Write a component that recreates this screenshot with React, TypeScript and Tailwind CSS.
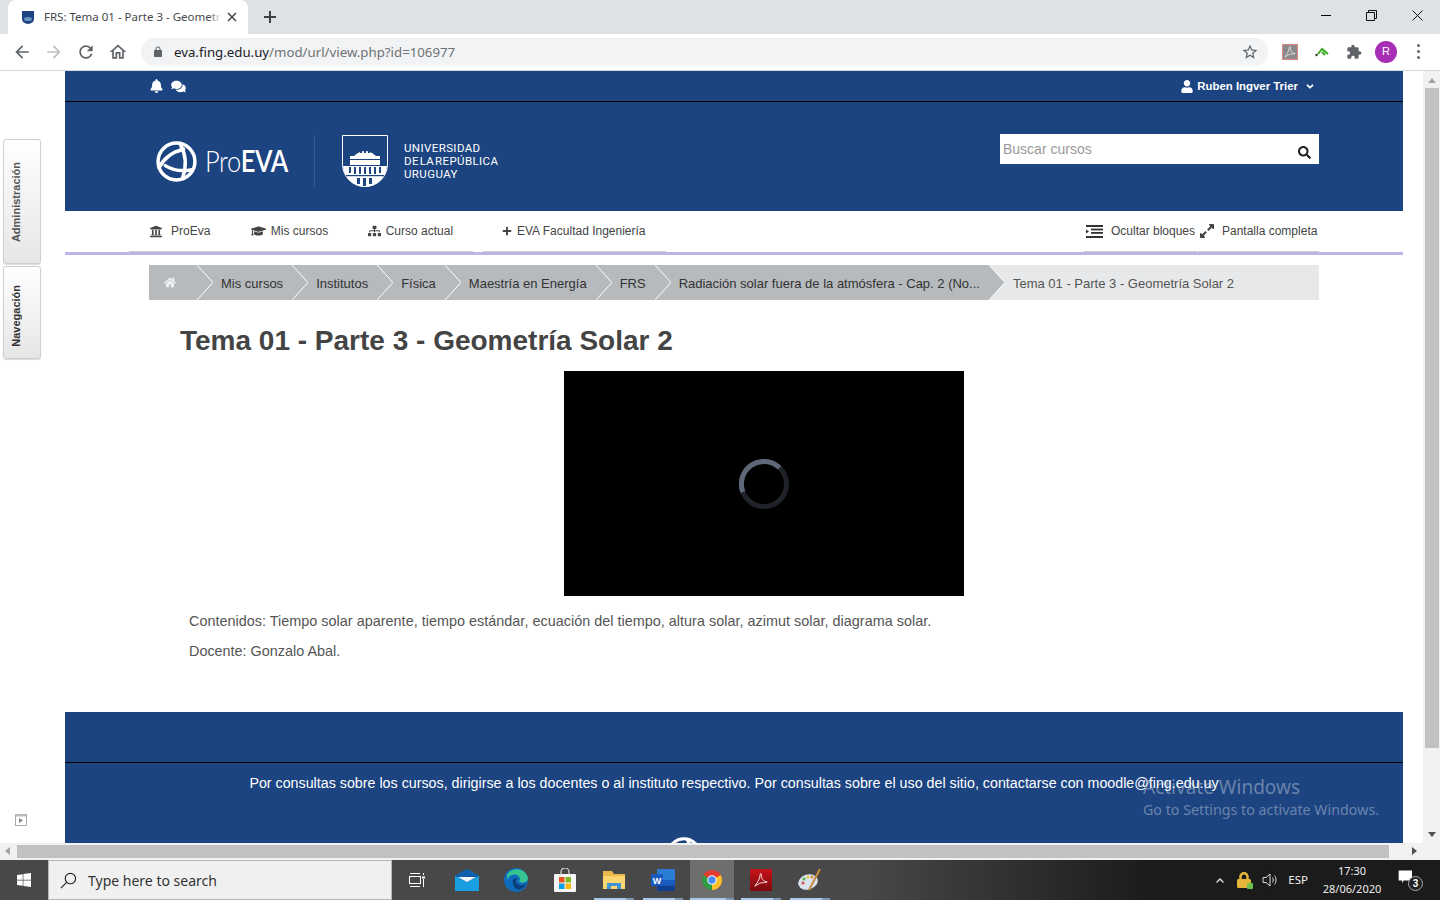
import React from "react";
import { FaBell, FaComments, FaUser, FaUniversity, FaGraduationCap, FaSitemap, FaPlus, FaHome, FaSearch, FaExpandAlt, FaAngleDown, FaChevronUp, FaLock, FaWindows } from "react-icons/fa";

const M = ({ d, className, fill = "currentColor" }: { d: string; className?: string; fill?: string }) => (
  <svg viewBox="0 0 24 24" className={className} fill={fill}><path d={d} /></svg>
);

const ProLogo = ({ className }: { className?: string }) => (
  <svg viewBox="0 0 42 40" className={className} fill="none" stroke="white" strokeWidth="3.4" strokeLinecap="round">
    <circle cx="21" cy="20" r="18" />
    <path d="M4 26 Q 11 12 28 8" />
    <path d="M10 24 Q 21 31 36 28" />
    <path d="M25 4 Q 33 18 27 36" />
  </svg>
);

const Shield = () => (
  <svg viewBox="0 0 46 52" className="h-[52px] w-[46px]">
    <path d="M0.5 0.5 H45.5 V29 A22.5 22.5 0 0 1 0.5 29 Z" fill="none" stroke="white" strokeWidth="1" />
    <path d="M12 21 Q23 11 34 21 Z" fill="white" />
    <path d="M8 21 H38 V30 H8 Z" fill="white" />
    <path d="M1 30 H45 A22 22 0 0 1 1 30 Z" fill="white" />
    <g fill="#1c4481">
      <rect x="18" y="16" width="2" height="2" /><rect x="22" y="16" width="2" height="2" /><rect x="26" y="16" width="2" height="2" />
      <rect x="8" y="24" width="30" height="1" />
      <rect x="1" y="30" width="44" height="1" />
      <rect x="7" y="32" width="2" height="6" /><rect x="12" y="32" width="2" height="7" /><rect x="17" y="32" width="2" height="7" /><rect x="22" y="32" width="2" height="7" /><rect x="27" y="32" width="2" height="7" /><rect x="32" y="32" width="2" height="7" /><rect x="37" y="32" width="2" height="6" />
      <rect x="4" y="40" width="38" height="1.2" />
      <rect x="15" y="43" width="3" height="6" /><rect x="21" y="43" width="3" height="8" /><rect x="27" y="43" width="3" height="6" />
    </g>
  </svg>
);

const crumbs = ["Mis cursos", "Institutos", "Física", "Maestría en Energía", "FRS", "Radiación solar fuera de la atmósfera - Cap. 2 (No..."];

const Chevron = () => (
  <svg viewBox="0 0 16 35" className="absolute left-0 top-0 h-[35px] w-[16px]" fill="none" stroke="#ffffff" strokeWidth="1">
    <polyline points="0,0 16,17.5 0,35" />
  </svg>
);

const TaskBtn = ({ children, active, running }: { children: React.ReactNode; active?: boolean; running?: boolean }) => (
  <div className="relative flex h-10 w-[49px] items-center justify-center">
    {active && <div className="absolute bottom-0 left-[2px] right-[3px] top-0 bg-[#6e6e6e]" />}
    <div className="relative flex items-center justify-center">{children}</div>
    {running && <div className={`absolute bottom-0 flex h-[2px] ${active ? "left-[2px] right-[3px]" : "left-[4px] right-[5px]"}`}><div className="flex-1 bg-[#a8c8ee]" /><div className="w-[8px] bg-[#7d97b5]" /></div>}
  </div>
);

export default function App() {
  return (
    <div className="flex h-[900px] w-[1440px] flex-col overflow-hidden bg-white font-['Liberation_Sans',Arial,sans-serif] text-[#444]">
      {/* Tab strip */}
      <div className="flex h-[34px] shrink-0 items-stretch bg-[#dee1e6] pl-[8px] font-['Noto_Sans',sans-serif]">
        <div className="flex w-[240px] items-center rounded-t-[8px] bg-white pl-[14px] pr-[11px]">
          <svg viewBox="0 0 12 13" className="h-[13px] w-[12px] shrink-0"><path d="M0 0H12V8A6 5 0 0 1 0 8Z" fill="#1c4481" /><ellipse cx="6" cy="8" rx="4" ry="2" fill="#6d93c4" /></svg>
          <div className="relative ml-[10px] whitespace-nowrap text-[11.5px] text-[#45484c]">
            FRS: Tema 01 - Parte 3 - Geometr
            <div className="absolute bottom-0 right-0 top-0 w-[12px] bg-gradient-to-r from-transparent to-white" />
          </div>
          <svg viewBox="0 0 10 10" className="ml-auto h-[10px] w-[10px]" stroke="#45484c" strokeWidth="1.6"><path d="M1 1L9 9M9 1L1 9" /></svg>
        </div>
        <div className="ml-[16px] flex items-center">
          <svg viewBox="0 0 12 12" className="h-[12px] w-[12px]" stroke="#3c4043" strokeWidth="2"><path d="M6 0V12M0 6H12" /></svg>
        </div>
        <div className="ml-auto flex items-center gap-[35px] pb-[4px] pr-[17px]">
          <div className="h-[1px] w-[10px] bg-black" />
          <svg viewBox="0 0 11 11" className="h-[11px] w-[11px]" fill="none" stroke="#111" strokeWidth="1"><path d="M0.5 2.5H8.5V10.5H0.5ZM2.5 2.5V0.5H10.5V8.5H8.5" /></svg>
          <svg viewBox="0 0 11 11" className="h-[11px] w-[11px]" stroke="#111" strokeWidth="1"><path d="M0.5 0.5L10.5 10.5M10.5 0.5L0.5 10.5" /></svg>
        </div>
      </div>
      {/* Toolbar */}
      <div className="flex h-[37px] shrink-0 items-center border-b border-[#d5d7da] bg-white pb-[1px] pl-[12px]">
        <M d="M20 11H7.83l5.59-5.59L12 4l-8 8 8 8 1.41-1.41L7.83 13H20v-2z" className="h-[20px] w-[20px] text-[#5f6368]" />
        <M d="M12 4l-1.41 1.41L16.17 11H4v2h12.17l-5.58 5.59L12 20l8-8z" className="ml-[12px] h-[20px] w-[20px] text-[#bcbfc3]" />
        <M d="M17.65 6.35C16.2 4.9 14.21 4 12 4c-4.42 0-7.99 3.58-7.99 8s3.57 8 7.99 8c3.73 0 6.84-2.55 7.73-6h-2.08c-.82 2.33-3.04 4-5.65 4-3.31 0-6-2.69-6-6s2.69-6 6-6c1.66 0 3.14.69 4.22 1.78L13 11h7V4l-2.35 2.35z" className="ml-[12px] h-[20px] w-[20px] text-[#5f6368]" />
        <M d="M12 5.69l5 4.5V18h-2v-6H9v6H7v-7.81l5-4.5M12 3L2 12h3v8h6v-6h2v6h6v-8h3L12 3z" className="ml-[12px] h-[20px] w-[20px] text-[#5f6368]" />
        <div className="ml-[13px] flex h-[28px] w-[1127px] items-center rounded-full bg-[#f1f3f4] pl-[11px] pr-[9px]">
          <M d="M18 8h-1V6c0-2.76-2.24-5-5-5S7 3.24 7 6v2H6c-1.1 0-2 .9-2 2v10c0 1.1.9 2 2 2h12c1.1 0 2-.9 2-2V10c0-1.1-.9-2-2-2zM9 6c0-1.66 1.34-3 3-3s3 1.34 3 3v2H9V6z" className="h-[12px] w-[12px] text-[#5f6368]" />
          <div className="ml-[10px] pt-[2px] font-['Noto_Sans',sans-serif] text-[13.25px] text-[#6f7276]"><span className="text-[#202124]">eva.fing.edu.uy</span>/mod/url/view.php?id=106977</div>
          <M d="M22 9.24l-7.19-.62L12 2 9.19 8.63 2 9.24l5.46 4.73L5.82 21 12 17.27 18.18 21l-1.63-7.03L22 9.24zM12 15.4l-3.76 2.27 1-4.28-3.32-2.88 4.38-.38L12 6.1l1.71 4.04 4.38.38-3.32 2.88 1 4.28L12 15.4z" className="ml-auto h-[18px] w-[18px] text-[#5f6368]" />
        </div>
        <div className="ml-[14px] flex h-[16px] w-[16px] items-center justify-center border border-[#e08b80] bg-[#8a8a8a]">
          <svg viewBox="0 0 14 14" className="h-[12px] w-[12px]" fill="none" stroke="#dddddd" strokeWidth="1.1"><path d="M1 13C4 9 6 5 6 2C6 0 8 0 7.5 2.5C7 5.5 9.5 8.5 13 8.5C13 10 9 8.5 5 10.5C3 11.5 2 13 1 13Z" /></svg>
        </div>
        <svg viewBox="0 0 14 10" className="ml-[17px] h-[10px] w-[14px]" stroke="#3aa821" strokeWidth="2" fill="none"><path d="M3 7L7 2L13 7M7 5L10 8" /><circle cx="1.5" cy="8" r="1.2" fill="#333" stroke="none" /></svg>
        <M d="M20.5 11H19V7c0-1.1-.9-2-2-2h-4V3.5C13 2.12 11.88 1 10.5 1S8 2.12 8 3.5V5H4c-1.1 0-1.99.9-1.99 2v3.8H3.5c1.49 0 2.7 1.21 2.7 2.7s-1.21 2.7-2.7 2.7H2V20c0 1.1.9 2 2 2h3.8v-1.5c0-1.49 1.21-2.7 2.7-2.7 1.49 0 2.7 1.21 2.7 2.7V22H17c1.1 0 2-.9 2-2v-4h1.5c1.38 0 2.5-1.12 2.5-2.5S21.88 11 20.5 11z" className="ml-[17px] h-[16px] w-[16px] text-[#5f6368]" />
        <div className="ml-[13px] flex h-[22px] w-[22px] items-center justify-center rounded-full bg-[#a62fb5] text-[11px] text-white">R</div>
        <div className="ml-[20px] flex flex-col gap-[3px]">
          <div className="h-[3px] w-[3px] rounded-full bg-[#5f6368]" /><div className="h-[3px] w-[3px] rounded-full bg-[#5f6368]" /><div className="h-[3px] w-[3px] rounded-full bg-[#5f6368]" />
        </div>
      </div>

      {/* Viewport */}
      <div className="relative flex h-[772px] shrink-0 overflow-hidden">
        <div className="flex w-[65px] shrink-0 flex-col pl-[3px] pt-[68px]">
          <div className="flex h-[125px] w-[38px] items-center rounded-[3px] border border-[#cfcfcf] bg-gradient-to-b from-white to-[#e6e6e6] pl-[5px] pt-[2px] shadow-[0_1px_1px_rgba(0,0,0,0.15)]">
            <span className="rotate-180 text-[11px] font-bold leading-[14px] text-[#555] [writing-mode:vertical-rl]">Administración</span>
          </div>
          <div className="mt-[2px] flex h-[93px] w-[38px] items-center rounded-[3px] border border-[#cfcfcf] bg-gradient-to-b from-white to-[#e6e6e6] pl-[5px] pt-[6px] shadow-[0_1px_1px_rgba(0,0,0,0.15)]">
            <span className="rotate-180 text-[11px] font-bold leading-[14px] text-[#333] [writing-mode:vertical-rl]">Navegación</span>
          </div>
          <svg viewBox="0 0 12 12" className="ml-[12px] mt-auto mb-[17px] h-[12px] w-[12px]" fill="none"><rect x="0.5" y="0.5" width="11" height="11" stroke="#aaa" /><rect x="0.5" y="0.5" width="11" height="2" fill="#bbb" /><path d="M4 4L8 6.5L4 9Z" fill="#888" /></svg>
        </div>

        <div className="flex w-[1338px] shrink-0 flex-col">
          {/* Top bar */}
          <div className="flex h-[31px] shrink-0 items-center border-b border-black bg-[#1c4481] pl-[85px] pr-[88px] text-white">
            <FaBell className="h-[14px] w-[13px]" />
            <FaComments className="ml-[8px] h-[13px] w-[15px]" />
            <FaUser className="ml-auto h-[13px] w-[12px]" />
            <span className="ml-[4px] pt-[1px] text-[11.4px] font-bold">Ruben Ingver Trier</span>
            <FaAngleDown className="ml-[7px] h-[11px] w-[10px]" />
          </div>
          {/* Header */}
          <div className="flex h-[109px] shrink-0 bg-[#1c4481] pl-[91px] pr-[84px] pt-[33px]">
            <div className="flex h-[52px] items-start">
              <ProLogo className="-ml-[1px] mt-[6px] h-[41px] w-[43px]" />
              <div className="ml-[7px] mt-[6px] w-[85px] whitespace-nowrap font-['Lato',sans-serif] text-[30px] leading-[38px] tracking-[-0.5px] text-white"><div className="origin-left scale-x-[0.85]"><span className="font-light">Pro</span><span className="font-semibold">EVA</span></div></div>
              <div className="ml-[24px] h-[52px] w-[1px] bg-[#36598f]" />
              <div className="ml-[27px]"><Shield /></div>
              <div className="ml-[16px] mt-[7px] whitespace-nowrap font-['Roboto',sans-serif] text-[11.5px] leading-[13px] tracking-[0.4px] text-white [word-spacing:-2.5px]">UNIVERSIDAD<br />DE LA REPÚBLICA<br />URUGUAY</div>
            </div>
            <div className="ml-auto -mt-[1px] flex h-[30px] w-[319px] items-start bg-white pl-[3px] pr-[8px]">
              <span className="mt-[7px] text-[14px] leading-[16px] text-[#999]">Buscar cursos</span>
              <FaSearch className="ml-auto mt-[12px] h-[13px] w-[13px] text-[#222]" />
            </div>
          </div>
          {/* Nav */}
          <div className="flex h-[44px] shrink-0 border-b-[3px] border-[#bcb3e8] bg-white pl-[64px] pr-[84px] text-[12px] text-[#444]">
            <div className="flex w-[344px] items-center border-b border-[#cccccc] pl-[20px]">
              <FaUniversity className="h-[13px] w-[14px]" /><span className="ml-[8px]">ProEva</span>
              <FaGraduationCap className="ml-[40.5px] h-[14px] w-[15px]" /><span className="ml-[5px]">Mis cursos</span>
              <FaSitemap className="ml-[39.5px] h-[12px] w-[13px]" /><span className="ml-[5px]">Curso actual</span>
            </div>
            <div className="ml-[10px] flex w-[183px] items-center border-b border-[#cccccc] pl-[19px]">
              <FaPlus className="h-[10px] w-[10px]" /><span className="ml-[5px] whitespace-nowrap">EVA Facultad Ingeniería</span>
            </div>
            <div className="ml-auto flex w-[113px] items-center whitespace-nowrap border-b border-[#cccccc] pl-[2px]">
              <svg viewBox="0 0 17 13" className="h-[13px] w-[17px]" fill="#333"><rect width="17" height="2" /><rect x="5" y="3.6" width="12" height="1.8" /><rect x="5" y="7" width="12" height="1.8" /><rect y="11" width="17" height="2" /><path d="M0 4.5L3 6.5L0 8.5Z" /></svg>
              <span className="ml-[8px]">Ocultar bloques</span>
            </div>
            <div className="ml-[1px] flex w-[121px] items-center whitespace-nowrap border-b border-[#cccccc] pl-[1px]">
              <FaExpandAlt className="h-[16px] w-[16px]" /><span className="ml-[7px]">Pantalla completa</span>
            </div>
          </div>
          {/* Content */}
          <div className="flex h-[457px] shrink-0 flex-col bg-white px-[84px] pt-[10px]">
            <div className="flex h-[35px] w-[1170px] shrink-0 items-center bg-[#b6babd] text-[13px] text-[#333]">
              <div className="flex h-full w-[48px] shrink-0 items-center pl-[15px]"><FaHome className="h-[11px] w-[12px] text-white/80" /></div>
              {crumbs.map((c) => (
                <div key={c} className="relative flex h-full shrink-0 items-center whitespace-nowrap pl-[24px] pr-[9px] pt-[2px]"><Chevron />{c}</div>
              ))}
              <div className="relative flex h-full flex-1 items-center bg-[#e7e8ea] pl-[24px] pt-[2px] text-[#555]">
                <svg viewBox="0 0 16 35" className="absolute left-0 top-0 h-[35px] w-[16px]"><polygon points="0,0 16,17.5 0,35" fill="#b6babd" /><polyline points="0,0 16,17.5 0,35" fill="none" stroke="#fff" /></svg>
                Tema 01 - Parte 3 - Geometría Solar 2
              </div>
            </div>
            <h1 className="ml-[31px] mt-[25px] text-[28px] font-bold leading-[32px] text-[#444]">Tema 01 - Parte 3 - Geometría Solar 2</h1>
            <div className="ml-[415px] mt-[14px] flex h-[225px] w-[400px] shrink-0 items-center justify-center bg-black">
              <svg viewBox="0 0 50 50" className="h-[50px] w-[50px]" fill="none" strokeWidth="5"><circle cx="25" cy="25" r="22.5" stroke="#1f2329" /><path d="M40.6 8.8 A22.5 22.5 0 0 0 3.9 33" stroke="#5f6879" /></svg>
            </div>
            <p className="ml-[40px] mt-[17px] text-[14.4px] leading-[17px] tracking-[0.02px] text-[#555]">Contenidos: Tiempo solar aparente, tiempo estándar, ecuación del tiempo, altura solar, azimut solar, diagrama solar.</p>
            <p className="ml-[40px] mt-[13px] text-[14.4px] leading-[17px] text-[#555]">Docente: Gonzalo Abal.</p>
          </div>
          {/* Footer */}
          <div className="flex h-[131px] shrink-0 flex-col items-center overflow-hidden bg-[#1c4481] text-white">
            <div className="h-[51px] w-full shrink-0 border-b border-black" />
            <p className="mt-[12px] whitespace-nowrap text-[14.28px] leading-[17px]">Por consultas sobre los cursos, dirigirse a los docentes o al instituto respectivo. Por consultas sobre el uso del sitio, contactarse con moodle@fing.edu.uy</p>
            <ProLogo className="ml-[600px] mt-[45px] h-[36px] w-[38px] shrink-0 self-start" />
          </div>
        </div>

        {/* Right gutter + vertical scrollbar */}
        <div className="w-[20px] shrink-0 bg-white" />
        <div className="flex w-[17px] shrink-0 flex-col items-center bg-[#f1f1f1]">
          <div className="mt-[7px] h-0 w-0 border-x-[4px] border-b-[5px] border-x-transparent border-b-[#a3a3a3]" />
          <div className="mt-[5px] h-[660px] w-[14px] bg-[#c1c1c1]" />
          <div className="mt-auto mb-[6px] h-0 w-0 border-x-[4px] border-t-[5px] border-x-transparent border-t-[#505050]" />
        </div>

        {/* Activate Windows watermark */}
        <div className="pointer-events-none absolute left-[1143px] top-[703px] font-['Noto_Sans',sans-serif] text-white/35">
          <div className="text-[19px] leading-[26px]">Activate Windows</div>
          <div className="text-[14.25px] leading-[19px]">Go to Settings to activate Windows.</div>
        </div>
      </div>

      {/* Horizontal scrollbar */}
      <div className="flex h-[17px] shrink-0 items-center bg-[#f1f1f1] pb-[1px]">
        <div className="ml-[5px] h-0 w-0 border-y-[4px] border-r-[5px] border-y-transparent border-r-[#a3a3a3]" />
        <div className="ml-[7px] h-[13px] w-[1372px] bg-[#c1c1c1]" />
        <div className="ml-[23px] h-0 w-0 border-y-[4px] border-l-[5px] border-y-transparent border-l-[#505050]" />
      </div>

      {/* Taskbar */}
      <div className="flex h-[40px] shrink-0 items-stretch bg-linear-to-r from-[#484848] from-[60%] to-[#1b1b1b] to-[80%] text-white">
        <div className="flex w-[48px] items-center justify-center"><FaWindows className="h-[16px] w-[16px]" /></div>
        <div className="flex w-[344px] items-center border border-[#b5b5b5] bg-[#f0f0f0] pl-[11px] pt-[1px] font-['Noto_Sans',sans-serif] text-[14px] text-[#333]">
          <svg viewBox="0 0 18 18" className="h-[17px] w-[17px]" fill="none" stroke="#222" strokeWidth="1.2"><circle cx="11" cy="7" r="5.5" /><path d="M7 11L1 17" /></svg>
          <span className="ml-[11px]">Type here to search</span>
        </div>
        <TaskBtn>
          <svg viewBox="0 0 16 16" className="h-[16px] w-[16px]" fill="none" stroke="white" strokeWidth="1"><rect x="0.5" y="4.5" width="11" height="7" /><path d="M1 1.5H11M1 14.5H11M14.5 1V3M14.5 7V15" /><rect x="13" y="4.5" width="3" height="2" fill="white" stroke="none" /></svg>
        </TaskBtn>
        <div className="w-[1.5px]" />
        <TaskBtn>
          <svg viewBox="0 0 24 22" className="h-[22px] w-[24px]"><path d="M0 7L12 0L24 7V22H0Z" fill="#1a9fe3" /><path d="M0 7L12 0L24 7L12 13Z" fill="#0c5fa8" /><path d="M3 8H21L12 13Z" fill="#f2f6fa" /></svg>
        </TaskBtn>
        <TaskBtn>
          <svg viewBox="0 0 24 24" className="h-[24px] w-[24px]"><circle cx="12" cy="12" r="12" fill="#0f6cbd" /><path d="M3 7C7 -1 21 -1 24 10C24 15 17 16 15 13C18 10 13 5 8 7C5 8 4 10 3 12Z" fill="#35c38f" /><path d="M9 16C7 12 11 9 14 11C11 11 11 16 16 17C19 18 21 16 22 15C20 22 12 25 9 16Z" fill="#0a3f7a" /></svg>
        </TaskBtn>
        <TaskBtn>
          <svg viewBox="0 0 24 24" className="h-[24px] w-[24px]"><rect x="1" y="6" width="22" height="18" rx="1" fill="#f5f5f5" /><path d="M8 8V4A4 4 0 0 1 16 4V8" fill="none" stroke="#ddd" strokeWidth="1.2" /><rect x="6" y="9" width="5.5" height="5.5" fill="#e8531e" /><rect x="12.5" y="9" width="5.5" height="5.5" fill="#7cb81f" /><rect x="6" y="15.5" width="5.5" height="5.5" fill="#0aa0e8" /><rect x="12.5" y="15.5" width="5.5" height="5.5" fill="#fdb812" /></svg>
        </TaskBtn>
        <TaskBtn running>
          <svg viewBox="0 0 22 18" className="h-[18px] w-[22px]"><path d="M0 0H9L11 3H22V18H0Z" fill="#e9b949" /><path d="M0 5H22V18H0Z" fill="#fbd66e" /><path d="M4 18V12H18V18H14V15H8V18Z" fill="#3f93d6" /></svg>
        </TaskBtn>
        <TaskBtn running>
          <svg viewBox="0 0 24 22" className="h-[22px] w-[24px]"><rect x="6" y="0" width="18" height="22" fill="#2b7cd3" /><rect x="6" y="11" width="18" height="5.5" fill="#185abd" /><rect x="6" y="16.5" width="18" height="5.5" fill="#103f91" /><rect x="0" y="5" width="12" height="12" fill="#185abd" /><text x="6" y="14.5" fontSize="9" fontWeight="700" fill="white" textAnchor="middle" fontFamily="Liberation Sans">W</text></svg>
        </TaskBtn>
        <TaskBtn active running>
          <svg viewBox="0 0 24 24" className="h-[22px] w-[22px]"><circle cx="12" cy="12" r="11" fill="#e33b2e" /><path d="M12 12L21.5 6.5A11 11 0 0 1 12 23Z" fill="#fbc02d" /><path d="M12 12L12 23A11 11 0 0 1 2.5 6.5Z" fill="#2e9e46" /><circle cx="12" cy="12" r="5.2" fill="white" /><circle cx="12" cy="12" r="4" fill="#4a8af4" /></svg>
        </TaskBtn>
        <TaskBtn running>
          <div className="flex h-[22px] w-[22px] items-center justify-center bg-gradient-to-b from-[#c8121a] to-[#7d0a0e]"><svg viewBox="0 0 16 16" className="h-[14px] w-[14px]" fill="none" stroke="white" strokeWidth="1"><path d="M1 15C5 10 7 5 7 2C7 0 9 0 8.5 3C8 6 11 10 15 10C15 12 10 10 6 12C4 13 2 15 1 15Z" /></svg></div>
        </TaskBtn>
        <TaskBtn running>
          <svg viewBox="0 0 24 24" className="h-[24px] w-[24px]"><ellipse cx="10" cy="14" rx="10" ry="7.5" fill="#d8e3ee" transform="rotate(-18 10 14)" /><circle cx="5" cy="15" r="1.6" fill="#d9534f" /><circle cx="6" cy="11" r="1.5" fill="#4fae4f" /><circle cx="10" cy="9" r="1.5" fill="#e9c53c" /><circle cx="14" cy="9" r="1.5" fill="#e58b2e" /><path d="M22 1L11 22" stroke="#c68c3f" strokeWidth="2" /></svg>
        </TaskBtn>
        <div className="ml-auto flex items-center pr-[14px]">
          <FaChevronUp className="h-[9px] w-[14px] text-[#ddd]" />
          <div className="relative ml-[10px]"><FaLock className="h-[16px] w-[14px] text-[#e5b53a]" /><div className="absolute -bottom-[1px] -right-[2px] h-[6px] w-[6px] rounded-[1px] bg-[#6cc24a]" /></div>
          <svg viewBox="0 0 16 16" className="ml-[11px] h-[16px] w-[16px]" fill="none" stroke="#ddd" strokeWidth="1"><path d="M1 5.5H4L8 2V14L4 10.5H1Z" /><path d="M10.5 5.5C11.5 7 11.5 9 10.5 10.5M12.5 3.5C14.5 6 14.5 10 12.5 12.5" /></svg>
          <span className="ml-[10px] font-['Noto_Sans',sans-serif] text-[11.5px] text-[#eee]">ESP</span>
          <div className="ml-[9px] flex w-[70px] flex-col items-center font-['Noto_Sans',sans-serif] text-[11px] leading-[18px] text-[#eee]"><span>17:30</span><span>28/06/2020</span></div>
          <div className="relative ml-[9px] h-[24px] w-[30px]">
            <M d="M2 3H18V15H8L6 18V15H2Z" className="absolute left-[1px] top-[0px] h-[20px] w-[20px] text-white" />
            <div className="absolute bottom-[1px] right-[3px] flex h-[15px] w-[15px] items-center justify-center rounded-full border border-[#aaa] bg-[#222] text-[10px] font-bold leading-none">3</div>
          </div>
        </div>
      </div>
    </div>
  );
}
